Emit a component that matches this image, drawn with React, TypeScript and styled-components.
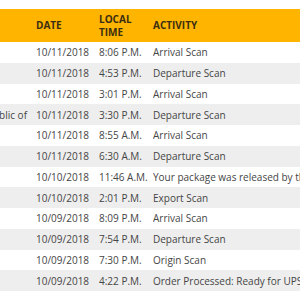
import React from "react";
import styled, { createGlobalStyle } from "styled-components";

const Global = createGlobalStyle`
  html, body { margin: 0; padding: 0; background: #ffffff; overflow: hidden; }
  body { font-family: "Open Sans", "Liberation Sans", sans-serif; }
  *, *::before, *::after { box-sizing: border-box; }
`;

const Page = styled.div`
  width: 300px;
  height: 300px;
  overflow: hidden;
  padding-top: 9px;
`;

const Table = styled.table`
  border-collapse: collapse;
  table-layout: fixed;
  width: 560px;
  margin-left: -110px;
  font-size: 10px;
`;

const HeadRow = styled.tr`
  background: #ffb500;
  height: 33px;
`;

const Th = styled.th<{ $w: number }>`
  width: ${(p) => p.$w}px;
  padding: 0;
  text-align: left;
  vertical-align: middle;
  font-weight: 700;
  color: #3b2e12;
  line-height: 13px;
`;

const Row = styled.tr<{ $alt: boolean }>`
  height: 20.75px;
  background: ${(p) => (p.$alt ? "#eeeeee" : "#ffffff")};
`;

const Td = styled.td<{ $right?: boolean }>`
  padding: 0 ${(p) => (p.$right ? 9 : 0)}px 0 0;
  text-align: ${(p) => (p.$right ? "right" : "left")};
  vertical-align: middle;
  white-space: nowrap;
  overflow: hidden;
  color: #454545;
  line-height: 14px;
`;

const rows: [string, string, string, string][] = [
  ["", "10/11/2018", "8:06 P.M.", "Arrival Scan"],
  ["", "10/11/2018", "4:53 P.M.", "Departure Scan"],
  ["", "10/11/2018", "3:01 P.M.", "Arrival Scan"],
  ["Incheon, Korea, Republic of", "10/11/2018", "3:30 P.M.", "Departure Scan"],
  ["", "10/11/2018", "8:55 A.M.", "Arrival Scan"],
  ["", "10/11/2018", "6:30 A.M.", "Departure Scan"],
  ["", "10/10/2018", "11:46 A.M.", "Your package was released by the clearing agency."],
  ["", "10/10/2018", "2:01 P.M.", "Export Scan"],
  ["", "10/09/2018", "8:09 P.M.", "Arrival Scan"],
  ["", "10/09/2018", "7:54 P.M.", "Departure Scan"],
  ["", "10/09/2018", "7:30 P.M.", "Origin Scan"],
  ["", "10/09/2018", "4:22 P.M.", "Order Processed: Ready for UPS"],
];

export default function App() {
  return (
    <Page>
      <Global />
      <Table>
        <thead>
          <HeadRow>
            <Th $w={146}>LOCATION</Th>
            <Th $w={63}>DATE</Th>
            <Th $w={54}>
              LOCAL
              <br />
              TIME
            </Th>
            <Th $w={297}>ACTIVITY</Th>
          </HeadRow>
        </thead>
        <tbody>
          {rows.map((r, i) => (
            <Row key={i} $alt={i % 2 === 1}>
              <Td $right>{r[0]}</Td>
              <Td>{r[1]}</Td>
              <Td>{r[2]}</Td>
              <Td>{r[3]}</Td>
            </Row>
          ))}
        </tbody>
      </Table>
    </Page>
  );
}
